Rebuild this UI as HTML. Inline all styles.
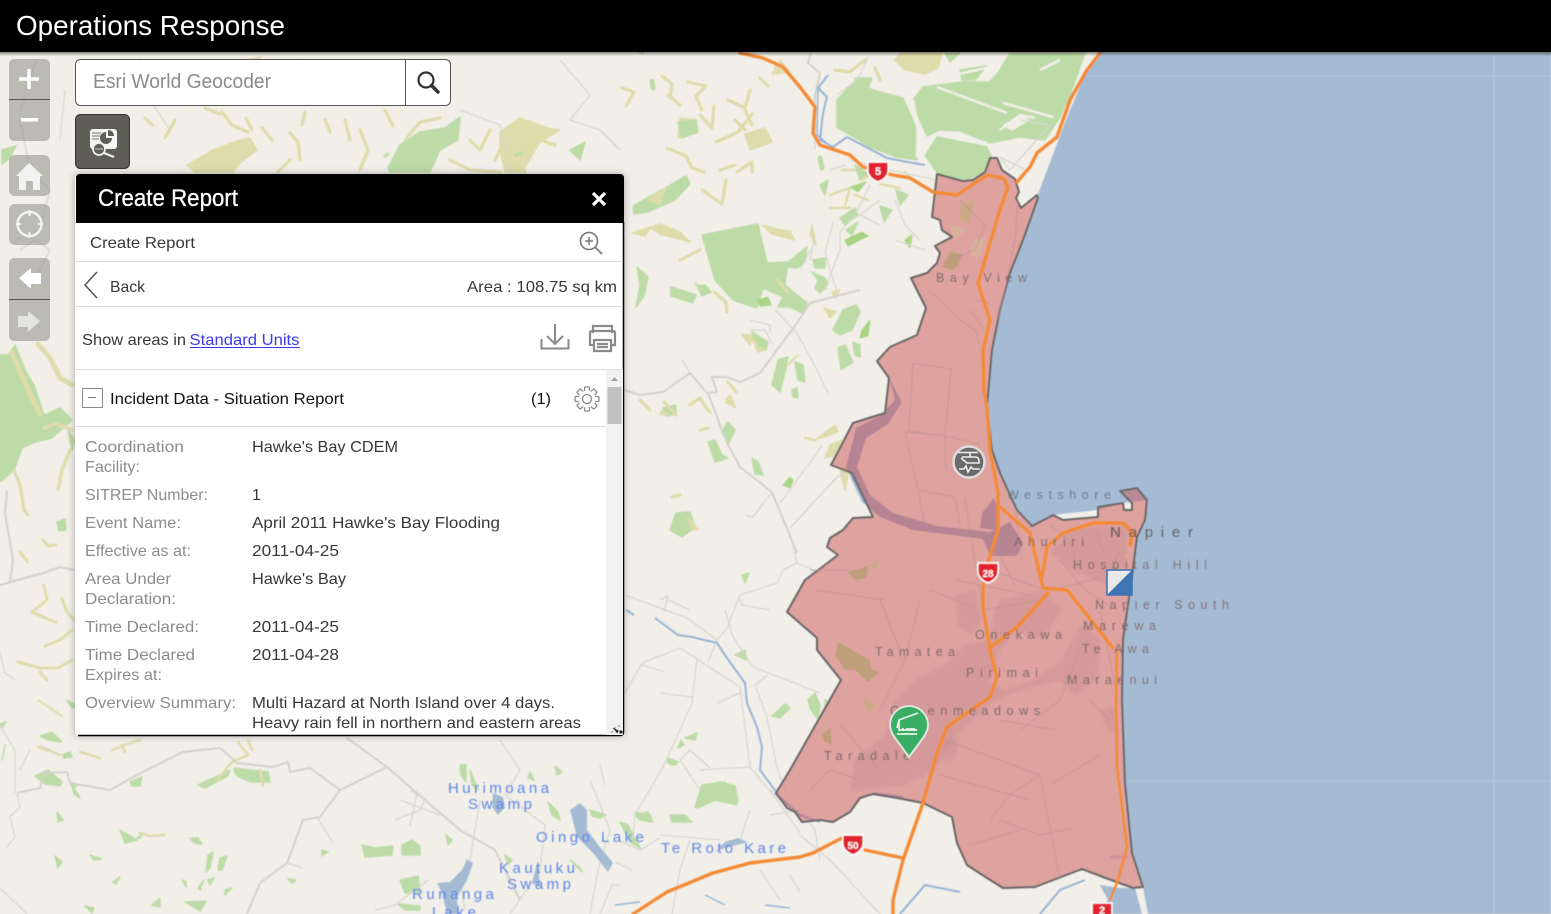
<!DOCTYPE html>
<html><head><meta charset="utf-8"><title>Operations Response</title>
<style>
html,body{margin:0;padding:0;background:#f2efe9;overflow:hidden}
svg{display:block;position:absolute;left:0;top:0}
text{font-family:"Liberation Sans",sans-serif}
.g{fill:#bddba7;stroke:#bddba7;stroke-width:1.5;stroke-linejoin:round}
.gd{fill:#a9d484;stroke:#a9d484;stroke-width:1;stroke-linejoin:round}
.o{fill:#dfdcab;stroke:#dfdcab;stroke-width:1.5;stroke-linejoin:round}
.ol{fill:none;stroke:#dfdcab;stroke-width:3.2;stroke-linejoin:round;stroke-linecap:round}
.gl{fill:none;stroke:#bddba7;stroke-width:5;stroke-linejoin:round;stroke-linecap:round}
.r{fill:none;stroke:#d8d6d0;stroke-width:1.3}
.r2{fill:none;stroke:#d3d1cb;stroke-width:2}
.pale{fill:none;stroke:#f2efe9;stroke-width:2.5}
.h{fill:none;stroke:#f48a35;stroke-width:3.4;stroke-linejoin:round;stroke-linecap:round}
.w{fill:#a5bbd4}
.ri{fill:none;stroke:#97b4d6;stroke-width:2}
.ir{fill:none;stroke:#b98d8e;stroke-width:1;opacity:.6}
.sub{fill:#b0757b;opacity:.2}
.ml{font-size:12.5px;fill:#7d6a6a}
.bl{font-size:15px;fill:#5c86e6}
.lb{font-size:16px;fill:#8c8c8c}
.vl{font-size:16px;fill:#383838}
.ctl{fill:#8e8e86;fill-opacity:.55}
</style></head><body>
<svg width="1551" height="914" viewBox="0 0 1551 914" xmlns="http://www.w3.org/2000/svg">
<defs>
<filter id="sh" x="-5%" y="-5%" width="110%" height="110%"><feDropShadow dx="0" dy="0" stdDeviation="4" flood-color="#000" flood-opacity=".3"/></filter>
<filter id="bl" x="0" y="0" width="100%" height="100%"><feGaussianBlur stdDeviation=".55"/></filter>
<filter id="bl2" x="-5%" y="-5%" width="110%" height="110%"><feGaussianBlur stdDeviation="1.6"/></filter>
<linearGradient id="top" x1="0" y1="0" x2="0" y2="1"><stop offset="0" stop-color="#000" stop-opacity=".45"/><stop offset="1" stop-color="#000" stop-opacity="0"/></linearGradient>
</defs>
<rect width="1551" height="914" fill="#f2efe9"/>
<g filter="url(#bl)">
<!-- water -->
<path class="w" d="M1100 52L1087 70 1067 117 1037 197 1023 240 1010 273 1000 310 992 350 987 407 992 450 1000 473 1017 510 1032 526 1053 515 1098 510 1123 503 1147 500 1145 520 1137 537 1132 577 1123 640 1122 700 1125 783 1132 853 1143 887 1148 914H1551V52Z"/>
<path d="M1494 52V914M1125 781H1551M1085 76H1551" stroke="#b3c6db" stroke-width="1" fill="none"/>
<!-- top greens -->
<path class="g" d="M853 83L880 92 903 98 915 125 917 160 897 157 870 147 837 127 837 100Z"/>
<path class="g" d="M923 87L962 82 990 82 1000 70 1010 53H1085L1070 95 1060 117 1045 140 1020 137 990 143 960 131 940 130 927 136 919 118 913 100Z"/>
<path class="g" d="M937 137L987 147 992 158 985 170 968 180 937 173 925 155Z"/>
<path class="o" d="M900 53H942L938 68 925 74 905 70 895 60Z"/>
<path class="g" d="M945 53H960L950 62Z"/>
<path class="g" d="M960 70L987 66 975 80 962 80Z"/>
<path class="pale" d="M937 87L1007 113M913 100L918 127 917 157M922 157L937 133 987 143M1003 103L1053 117M1000 130L1020 115 1035 118M940 78L1000 65M1040 70L1060 60"/>
<path d="M1003 125L1020 115 1030 120 1012 131Z" fill="#f2efe9"/>
<!-- right of panel olive/green -->
<path class="ol" d="M622 88L634 92 626 106M662 76L672 84 670 98M688 82L706 86 696 96 702 110M668 95L680 105M700 115L712 128 714 106M728 100L745 108 750 90M745 110L752 125"/>
<path class="ol" d="M667 148L686 156 692 168 704 172M720 170L735 165M737 172L752 162 752 172M735 120L745 130M716 142L738 132 752 114M702 190L722 204 726 180"/>
<path class="o" d="M680 118L697 120 692 132 678 138ZM780 60L790 72 772 74Z"/>
<path class="g" d="M678 122L696 120 698 132 682 138Z"/>
<path class="g" d="M633 206L658 192 686 176 690 184 675 200 648 212 634 214Z"/>
<path class="o" d="M648 200L665 188 660 204ZM745 134L765 128 772 142 750 150Z"/>
<path class="gl" d="M652 81L653 88M820 158L822 168M640 50L642 52"/>
<path class="ol" d="M835 70L850 72 865 60M895 60L920 72M875 68L880 80"/>
<path class="g" d="M855 78L872 78 868 88 855 90Z"/>
<path class="ol" d="M760 78L768 86M680 260L700 250M774 230L790 232"/>
<!-- big field and neighbours -->
<path class="g" d="M702 235L758 224 767 263 788 262 807 247 805 262 797 268 787 267 785 285 797 295 807 303 802 313 790 307 778 307 783 297 763 288 757 308 733 300 715 280Z"/>
<path class="o" d="M632 233L660 224 680 232 690 242 660 234 650 228 645 236Z"/>
<path class="o" d="M762 225L790 232 795 240 772 234Z"/>
<path class="ol" d="M714 292L726 302 727 312M696 284L708 292M777 280L788 292"/>
<path class="g" d="M671 287L696 295 693 303 671 296Z"/>
<path class="g" d="M697 286L705 285 711 292 702 296Z"/>
<path class="g" d="M637 267L648 277 644 296 636 307 640 285Z"/>
<path class="g" d="M813 260L825 258 825 268 815 268ZM812 272L825 278 828 284 820 293 815 288 818 280ZM833 330L843 310 856 305 860 312 852 330 840 335ZM838 348L845 345 853 362 841 370ZM853 342L860 345 860 357 855 355ZM772 385L778 360 788 357 785 372 780 392ZM795 362L803 365 805 382 798 380ZM792 390L797 388 798 398 793 397ZM752 332L768 342 766 350 756 345ZM663 408L676 405 676 414 666 416ZM722 432L728 422 735 430 728 445ZM708 442L715 440 722 455 728 458 715 462ZM752 458L758 462 763 475 755 474ZM670 530L676 513 690 512 695 527 682 537ZM840 218L855 208 858 215 845 225ZM846 230L858 222 852 235ZM880 206L892 210 884 222ZM896 190L908 195 900 205ZM820 185L828 180 825 195ZM855 165L870 175 860 180Z"/>
<path class="gd" d="M783 485L790 477 793 480 790 488ZM850 187L866 182 858 192ZM845 240L862 232 868 236 848 246ZM758 300L768 297 771 305 760 306ZM862 330L870 320 868 336 860 338ZM905 240L912 235 910 248Z"/>
<path class="o" d="M810 235L812 225 816 245ZM832 292L840 290 835 298ZM742 335L752 335 750 345ZM755 346L765 350 758 352ZM824 308L836 312 830 318ZM725 402L730 395 736 408ZM830 445L843 440 835 455 825 458ZM815 440L835 425 838 432ZM792 360L798 355 788 365ZM840 470L850 465 845 490ZM688 518L692 530 698 530ZM660 415L668 414 662 410Z"/>
<path class="ol" d="M690 405L700 398 706 408 710 412M728 382L736 392M750 336L756 344M676 415L664 402M700 430L708 428M680 495L672 497M640 400L650 410"/>
<path class="ol" d="M805 438L815 440M862 180L875 170M855 195L868 200M842 170L855 170M830 195L850 188 845 205M830 208L850 208M880 184L900 188M905 172L912 180" style="stroke-width:2.500"/>
<path class="g" d="M735 655L745 650 747 660ZM742 575L749 573 745 583ZM685 738L697 733 695 740ZM678 748L681 740 684 745ZM667 758L678 762 676 765 668 763ZM772 716L785 704 790 708 780 718ZM808 700L815 693 820 705 818 720 810 708ZM695 807L702 785 725 782 737 805 715 800 697 808ZM635 815L648 812 653 822 640 820ZM825 700L830 703 825 706Z"/>
<!-- olive upper panel bits -->
<path class="o" d="M187 165L213 150 240 140 250 138 257 150 240 163 233 172H195Z"/>
<path class="ol" d="M222 112L232 125 248 132M246 118L252 130M262 128L272 140M290 133L298 142 300 160M305 112L302 125M325 120L330 132M345 120L350 140M360 130L368 150 360 170M205 108L220 114M385 110L393 126M290 160L278 172M175 120L165 138M145 118L152 125M300 60L310 62"/>
<path class="g" d="M388 168L400 145 420 132 445 128 460 117 458 140 440 150 430 172H390Z"/>
<path class="ol" d="M405 140L420 122 440 118M470 140L480 150 490 130M495 160L512 125M515 160L525 172M540 140L555 145M450 160L470 170 500 172"/>
<path class="o" d="M500 132L520 118 548 128 560 130 540 142 522 172 505 172 500 150Z"/>
<path class="gl" d="M385 156L388 154M515 155L522 153" style="stroke-width:3"/>
<path class="ol" d="M240 62L260 58M130 70L140 60M180 72L190 72M300 70L312 85"/>
<path class="g" d="M2 150L16 146 10 158 2 164ZM120 92L130 90 125 98ZM570 150L585 142 580 160Z"/>
<!-- left strip -->
<path class="g" d="M0 355L8 355 15 345 26 372 34 385 44 415 60 408 72 420 52 438 35 442 22 448 14 470 0 482Z"/>
<path class="ol" d="M38 344L50 358 60 378 72 385M12 352L20 372 32 398 40 414" style="stroke-width:5"/>
<path class="ol" d="M44 428L56 424 72 430M14 470L20 485 24 510 28 515M58 490L62 470 70 450"/>
<path class="g" d="M57 522L65 519 66 530 59 531Z"/>
<path class="g" d="M68 430L75 440 72 450Z"/>
<path class="ol" d="M20 552L28 562M43 540L48 546 56 545M44 585L47 600 32 612 45 618 56 622M45 646L60 640 72 630M18 662L40 668 58 668 72 660M40 672L47 680M62 598L66 610 74 620" style="stroke-width:3"/>
<path class="g" d="M67 700L78 706 72 708ZM0 724L6 722 2 728ZM40 736L52 732 62 742 48 740ZM72 786L78 794 80 798 74 794ZM57 812L63 820 58 822ZM5 745L2 760Z"/>
<path class="ol" d="M38 700L62 716" style="stroke-width:2"/>
<!-- bottom-left fields -->
<path class="g" d="M35 776L48 770 62 782 60 786 45 784ZM70 782L78 785 73 788ZM62 755L70 752 72 757 64 758ZM198 785L230 770 228 776 205 788ZM234 768L250 770 268 772 270 782 250 782 236 775ZM130 782L142 777 140 786 132 786ZM120 830L137 840 125 843ZM137 838L142 834 140 838ZM55 856L62 862 58 868ZM90 855L102 859 94 860ZM85 906L94 908 92 913ZM185 902L206 901 200 911ZM152 905L160 898 160 907ZM190 838L198 838 202 844 194 843ZM208 855L213 852 210 868 206 872ZM220 858L227 856 222 870 218 870ZM182 880L186 882 186 887ZM198 888L204 880 200 890ZM113 882L120 877 116 884ZM362 845L375 848 393 846 392 855 365 857ZM402 845L412 840 420 846 420 855 402 855ZM288 879L296 880 292 883ZM398 904L420 906 420 910 405 910ZM322 850L328 852 322 856ZM208 880L214 878 210 885ZM225 890L232 888 225 895Z"/>
<path class="ol" d="M38 747L60 755M80 752L100 758M112 750L130 743 140 740M122 745L125 752M140 833L150 836 165 835M217 780L232 762 248 755 238 742M260 770L263 785M248 740L252 750" style="stroke-width:2.500"/>
<!-- bottom centre fields -->
<path class="g" d="M460 765L466 765 466 782 461 775ZM470 770L478 790 472 785ZM548 802L558 812 560 820 552 815ZM590 810L606 815 600 818 592 816ZM620 822L628 825 640 848 630 842ZM635 812L645 814 650 822ZM670 815L685 815 692 822 672 822ZM570 860L580 868 582 872ZM505 855L512 860 508 864ZM400 880L418 876 420 892 405 893ZM446 835L452 840 448 845ZM530 772L534 780 528 778ZM555 766L562 772 557 775Z"/>
<path class="g" d="M696 805L705 785 720 782 735 786 738 802 715 800 698 808Z"/>
<path class="g" d="M636 815L650 815 652 822 640 820ZM667 758L678 762 672 765Z"/>
<!-- grey roads -->
<path class="r2" d="M860 290L833 297 810 303 797 323 777 350 760 373 740 382 727 377 712 377 717 392 707 393 690 373 663 392 640 395 625 390M708 393L717 417 727 443 740 467 772 492 797 553"/>
<path class="r" d="M775 310L797 333 817 370 828 393M772 492L753 517 745 515M780 503L817 453 822 445M790 528L837 477 850 470M690 373L682 360M833 222L825 253 837 292M810 260L815 235M750 320L770 325 770 332M772 344L765 330 750 330"/>
<path class="r" d="M625 595L687 618 717 640 727 628 740 595 777 583 783 570 797 563 792 540M797 563L820 573M725 610L733 637 753 667 820 693M717 640L708 662M642 663L680 648 740 687 750 767 777 800 800 833M642 663L625 693M642 665L665 672M697 658L692 703 663 767 635 815 633 840M660 693L692 697M717 703L740 693M767 717L755 685 768 675M767 717L777 767 785 790M740 598L742 605 770 610M660 600L668 596 664 612M690 610L668 600"/>
<path class="r" d="M800 835L830 860 880 914M700 770L750 767M700 790L680 760 690 750 710 768M770 815L800 810 815 830 820 860M750 810L740 840M790 875L800 892M780 800L770 790M720 840L660 835M780 900L760 870M690 840L680 870 672 914M617 840L640 850 660 838M615 862L632 870M600 914L612 885 620 885"/>
<path class="r2" d="M17 793L40 788 43 773 67 772 70 783 110 790 137 775 183 752 220 748 237 763 273 767 288 762 290 772 310 768 340 790 387 767 417 793 460 830 495 850 520 900M340 790L320 817 303 820 287 863 260 883 247 914M387 767L347 738"/>
<path class="r" d="M317 817L333 843M17 793L20 807 10 817 15 837 7 847M0 888L27 914M287 863L303 868M440 815L400 800M395 820L420 810 425 800 410 790M417 793L410 826M428 880L395 905 375 910M460 880L465 910M500 740L520 770 505 795 545 825 540 870M540 870L510 914M590 780L610 830 598 870 590 914M600 765L605 785M480 800L470 860"/>
<path class="r2" d="M0 585L43 573 60 567 75 570M7 490L5 513 13 560 10 582"/>
<path class="r" d="M0 653L5 673 15 680M0 726L15 750 15 793M40 745L60 755M30 750L20 770M20 250L35 240 50 250 30 290M20 120L30 170 50 190 40 230 15 240M36 60L20 110M65 90L60 140"/>
<path class="r" d="M140 60L160 70 150 100 170 130M460 110L500 125 510 170M620 150L600 130 570 120 590 95 560 60"/>
<path class="r2" d="M811 52L808 63 820 73 815 95 813 135"/>
<path class="r" d="M868 57L860 75 853 83 837 95M890 170L937 180M850 160L890 170M815 150L815 115M830 170L845 165M880 200L860 215 880 225M870 185L855 215 840 232 840 250 825 290M800 270L810 250M895 200L905 225 920 240M895 240L910 245 925 250M1020 120L1050 125 1010 170 1000 157 1030 172"/>
<!-- rivers -->
<path class="ri" d="M828 75L818 88 827 97 823 113 820 140 833 147 847 137 887 158 913 163 925 165"/>
<path class="ri" style="stroke-width:1.500" d="M818 88L817 135 830 146"/>
<path class="ri" d="M655 618L678 635 692 637 717 643 727 658 745 683 747 703 757 727 762 747 760 770 777 793"/>
<path class="ri" d="M626 610L634 615M775 793L800 815 820 822M873 793L903 797M1040 914L1060 890 1085 880M900 914L925 885 960 892"/>
<path class="ri" d="M615 905L640 902M765 905L790 908M705 895L725 905" style="stroke-width:1.500"/>
<path class="w" d="M1100 885L1120 888 1135 888 1142 914H1095L1108 900ZM570 810L580 803 587 810 587 830 600 847 613 863 608 872 593 853 577 837ZM467 859L473 863 467 880 457 897 458 914H447L442 893 437 883 450 882 462 870ZM493 793L503 797 505 807 498 815 492 807ZM538 860L532 883 540 887ZM725 842L738 838 748 842 725 848 715 852Z"/>
<!-- estuary -->
<path fill="#a0b0cd" d="M889 378L895 400 880 416 856 428 846 467 862 502 880 517 913 530 983 539 990 556 1017 556 1023 543 1010 522 1000 527 990 532 937 526 893 513 870 495 857 467 866 438 888 424 902 402Z"/>
<path fill="#a0b0cd" d="M982 513L994 498 1000 515 996 530 980 528Z"/>
<!-- polygon -->
<path fill="#cc5c5c" fill-opacity=".52" stroke="#666" stroke-width="2" stroke-linejoin="round" d="M937 174L963 181 973 180 985 172 990 158 997 158 1002 170 1015 179 1019 192 1016 198 1021 208 1037 195 1038 198 1023 240 1010 273 1000 310 992 350 987 407 992 450 1000 473 1017 510 1032 526 1053 515 1063 520 1098 517 1098 507 1123 503 1124 510 1132 510 1132 503 1120 491 1137 488 1147 500 1145 520 1137 537 1132 577 1123 640 1122 700 1125 783 1132 853 1143 887 1133 888 1103 877 1082 869 1035 887 1003 888 987 878 967 865 957 843 952 817 923 803 903 799 873 794 860 798 850 812 833 822 820 820 802 822 795 812 787 808 776 793 790 770 841 680 817 650 817 638 787 612 805 580 838 555 827 547 830 538 843 530 853 518 873 517 852 473 831 465 853 423 885 413 889 378 877 361 890 347 917 335 926 308 911 278 927 273 937 263 940 253 935 246 952 237 942 230 940 220 932 217Z"/>
<!-- suburbs -->
<g filter="url(#bl2)">
<path class="sub" d="M955 595L975 590 982 620 972 635 958 625ZM1000 600L1045 590 1062 610 1040 640 1015 630 1000 650 990 682 1005 690 1030 682 1060 662 1085 620 1100 640 1098 680 1075 695 1060 680 1020 690 995 700 955 735 935 770 905 785 850 790 855 760 885 735 895 700 915 680 945 665 965 645 990 640 995 610Z"/>
<path class="sub" d="M1050 552L1075 527 1130 527 1120 590 1070 570Z"/>
<path class="sub" d="M1100 710L1116 705 1116 735 1105 725ZM945 740L960 735 955 760 942 760Z"/>
</g>
<path fill="#b89e74" opacity=".85" d="M838 642L870 660 872 670 880 672 868 682 855 670 845 670 835 655ZM942 267L950 252 962 254 958 266 952 270ZM848 572L868 566 866 578 855 580ZM822 735L830 728 832 745 825 742Z"/>
<path fill="#c8ab7a" opacity=".7" d="M862 697L875 705 868 714ZM960 205L975 200 968 225 960 220ZM870 565L880 558 875 570Z"/>
<path fill="#cfc098" opacity=".5" d="M950 225L965 230 955 240ZM975 240L985 238 978 260 970 252Z"/>
<!-- inner lines -->
<path class="ir" d="M913 363L951 369 945 436 909 431ZM905 432L945 436 980 444M905 432L918 490M945 436L946 470M918 490L955 497 960 525M980 345L975 330 960 320 940 300 928 290M960 200L985 225 975 250 950 260M1018 200L1015 240 1005 290 998 320M985 568L1045 590M955 580L1030 595M985 610L1040 600M1050 590L1100 578M918 490L925 525M815 590L885 600M855 570L810 570M930 590L975 608M880 600L900 650M920 600L905 660 880 710M945 740L1040 775 1010 795 990 820M965 500L990 655M1040 775L1060 880M1000 820L1040 835 1072 828M1020 730L1060 700 1080 650M1050 785L1100 755M840 725L880 770M810 790L830 770 860 780M1090 700L1110 720M970 310L985 330M975 300L992 305"/>
<path class="ir" d="M1015 510L1022 560M1000 555L1015 585M1050 525L1070 540 1075 560M1095 530L1105 555M1120 550L1110 570M1060 560L1085 590M1085 590L1108 605M1100 610L1118 700M1118 720L1118 780M970 845L1020 830M1000 720L1055 730M940 775L1030 800"/>
<path stroke="#a58" stroke-opacity=".25" stroke-width="3" fill="none" d="M1110 857H1128"/>
<!-- highways -->
<path class="h" d="M740 53L763 58 783 67 800 87 815 107 813 133 820 145 850 155 863 167 893 175 910 178 933 192 957 195 987 175 1003 178 1008 187 1000 210 990 243 978 283 990 320 983 350 984 390 987 407 990 450 998 493 998 530 988 563 983 587 983 607 990 650 997 677 990 697 947 727 938 750 923 803 903 860 893 900 893 914"/>
<path class="h" d="M1000 507L1030 533 1043 588 1067 590 1113 648M1048 593L1017 627 990 648M1042 577L1047 547 1063 533 1093 523 1123 523 1133 533 1130 545"/>
<path class="h" style="stroke-width:2.500" d="M1117 650L1116 700 1117 767 1127 847 1118 880 1110 900"/>
<path class="h" d="M1017 182L1030 167 1037 153 1057 137 1070 100 1087 70 1100 53"/>
<path class="h" d="M633 914L667 892 713 873 750 863 800 857 813 853 842 838M865 850L903 858"/>
<!-- labels -->
<text class="ml" x="936" y="282" textLength="91">Bay View</text>
<text class="ml" x="1007" y="499" textLength="104" style="fill:#6e7580">Westshore</text>
<text class="ml" x="1110" y="537" textLength="83" style="font-size:15px;fill:#555">Napier</text>
<text class="ml" x="1014" y="546" textLength="70">Ahuriri</text>
<text class="ml" x="1073" y="569" textLength="134">Hospital Hill</text>
<text class="ml" x="1095" y="609" textLength="134">Napier South</text>
<text class="ml" x="1083" y="630" textLength="73">Marewa</text>
<text class="ml" x="1082" y="653" textLength="67">Te Awa</text>
<text class="ml" x="975" y="639" textLength="87">Onekawa</text>
<text class="ml" x="875" y="656" textLength="80">Tamatea</text>
<text class="ml" x="966" y="677" textLength="72">Pirimai</text>
<text class="ml" x="1067" y="684" textLength="90">Maraenui</text>
<text class="ml" x="890" y="715" textLength="150">Greenmeadows</text>
<text class="ml" x="824" y="760" textLength="86">Taradale</text>
<text class="bl" x="448" y="793" textLength="101">Hurimoana</text>
<text class="bl" x="468" y="809" textLength="64">Swamp</text>
<text class="bl" x="536" y="842" textLength="108">Oingo Lake</text>
<text class="bl" x="661" y="853" textLength="125">Te Roto Kare</text>
<text class="bl" x="499" y="873" textLength="76">Kautuku</text>
<text class="bl" x="507" y="889" textLength="64">Swamp</text>
<text class="bl" x="412" y="899" textLength="82">Runanga</text>
<text class="bl" x="432" y="917" textLength="44">Lake</text>
<!-- shields -->
<g font-family="Liberation Sans" font-weight="700" fill="#fff" text-anchor="middle">
<path fill="#e2222d" stroke="#fff" stroke-width="1.500" d="M868 162H888Q889 172 887 175 884 180 878 182 872 180 869 175 867 172 868 162Z"/><text x="878" y="175" font-size="11">5</text>
<path fill="#e2222d" stroke="#fff" stroke-width="1.500" d="M978 563H998Q999 573 997 576 994 581 988 583 982 581 979 576 977 573 978 563Z"/><text x="988" y="577" font-size="10">28</text>
<path fill="#e2222d" stroke="#fff" stroke-width="1.500" d="M843 835H863Q864 845 862 848 859 853 853 855 847 853 844 848 842 845 843 835Z"/><text x="853" y="849" font-size="10">50</text>
<path fill="#e2222d" stroke="#fff" stroke-width="1.500" d="M1092 903H1112V925H1092Z"/><text x="1102" y="914" font-size="11">2</text>
</g>
</g>
<!-- square symbol -->
<g><rect x="1107" y="570" width="25" height="25" fill="#e9e9e9" stroke="#3c71b2" stroke-width="1.500"/><path d="M1132 570V595H1107Z" fill="#3f74b5"/></g>
<!-- helicopter -->
<g>
<circle cx="969" cy="462" r="15.500" fill="#6a6a6a" stroke="#dcdcdc" stroke-width="2.500"/>
<path d="M958 452.500H978M962 457H975Q979 457 979 461V463H967L961 458M970 453V457M959 469H964L966 466 968 472 971 467 973 469H980" fill="none" stroke="#f0f0f0" stroke-width="1.600"/>
</g>
<!-- green pin -->
<g>
<path d="M909 757L895 738Q890 731 890 725A19 19 0 0 1 928 725Q928 731 923 738Z" fill="#3aaf63" stroke="#dfe4df" stroke-width="2"/>
<path d="M897 728L899 720 918 713M899 720V730H917M897 734H917M902 729H904M906 729H915" fill="none" stroke="#eaf3ea" stroke-width="1.700"/>
</g>
<!-- top bar -->
<rect x="0" y="52" width="1551" height="4" fill="url(#top)"/>
<rect width="1551" height="52" fill="#000"/>
<text x="16" y="35" font-size="28" fill="#fff" textLength="269" lengthAdjust="spacingAndGlyphs">Operations Response</text>
<!-- left controls -->
<rect class="ctl" x="9" y="59" width="41" height="82" rx="5"/>
<rect x="9" y="99" width="41" height="1" fill="#555"/>
<path d="M19 79H39M29 69V89" stroke="#fff" stroke-width="3.500" fill="none"/>
<rect x="21" y="118" width="17" height="3.500" fill="#fff"/>
<rect class="ctl" x="9" y="155" width="41" height="41" rx="6"/>
<path d="M29 163L43 176H40V190H33V181H26V190H19V176H16Z" fill="#f2f2f0"/>
<rect class="ctl" x="9" y="204" width="41" height="41" rx="6"/>
<circle cx="29.500" cy="224" r="12" fill="none" stroke="#f2f2f0" stroke-width="2.500"/>
<path d="M29.500 210V216M29.500 232V238M16 224H21M38 224H43" stroke="#f2f2f0" stroke-width="2"/>
<rect class="ctl" x="9" y="258" width="41" height="83" rx="5"/>
<rect x="9" y="299" width="41" height="1" fill="#555"/>
<path d="M19 278L31 268V273H41V284H31V289Z" fill="#fff"/>
<path d="M40 321L28 311V316H18V327H28V332Z" fill="#e4e4e0"/>
<!-- search -->
<rect x="75.500" y="59.500" width="375" height="46" rx="5" fill="#fff" stroke="#555"/>
<line x1="405.500" y1="60" x2="405.500" y2="105" stroke="#555"/>
<text x="93" y="88" font-size="20" fill="#8b8b8b" textLength="178" lengthAdjust="spacingAndGlyphs">Esri World Geocoder</text>
<circle cx="426" cy="80" r="7.500" fill="none" stroke="#333" stroke-width="2.200"/>
<path d="M431.500 85.500L438 92" stroke="#333" stroke-width="3.500" stroke-linecap="round"/>
<!-- report button -->
<rect x="75.500" y="114.500" width="54" height="54" rx="5" fill="#5e5e57" stroke="#333"/>
<rect x="90" y="129" width="27" height="20" rx="3" fill="#f4f4f4"/>
<path d="M106 132A6 6 0 1 0 112 138H106Z" fill="#5e5e57"/>
<path d="M108 130A6 6 0 0 1 114 136H108Z" fill="#5e5e57"/>
<path d="M92 133H101M92 136H100M92 139H99" stroke="#8a8a85" stroke-width="1.200"/>
<circle cx="99" cy="149" r="6" fill="#5e5e57" stroke="#eee" stroke-width="1.800"/>
<path d="M95 149H103" stroke="#aaa" stroke-width="1.500"/>
<path d="M104 153L114 157" stroke="#eee" stroke-width="2.200"/>
<!-- panel -->
<g filter="url(#sh)"><rect x="75" y="174" width="549" height="562" rx="4" fill="#fff"/></g>
<path d="M76 223V178Q76 174 80 174H620Q624 174 624 178V223Z" fill="#000"/>
<path d="M623.500 222V732Q623.500 735.500 620 735.500H78" fill="none" stroke="#000" stroke-width="1.500"/>
<text x="98" y="206" font-size="24" fill="#fff" stroke="#fff" stroke-width=".3" textLength="140" lengthAdjust="spacingAndGlyphs">Create Report</text>
<path d="M593 193L605 205M605 193L593 205" stroke="#fff" stroke-width="3.200"/>
<text class="vl" x="90" y="248" textLength="105" lengthAdjust="spacingAndGlyphs">Create Report</text>
<circle cx="589" cy="241" r="8.500" fill="none" stroke="#777" stroke-width="1.600"/>
<path d="M585 241H593M589 237V245" stroke="#777" stroke-width="1.400"/>
<path d="M595 247L602 254" stroke="#888" stroke-width="2"/>
<rect x="76" y="261" width="547" height="1" fill="#ddd"/>
<path d="M97 272L85 285 97 298" fill="none" stroke="#555" stroke-width="1.500"/>
<text class="vl" x="110" y="292" textLength="35" lengthAdjust="spacingAndGlyphs">Back</text>
<text class="vl" x="467" y="292" textLength="150" lengthAdjust="spacingAndGlyphs">Area : 108.75 sq km</text>
<rect x="76" y="306" width="547" height="1" fill="#ddd"/>
<text class="vl" x="82" y="345" textLength="104" lengthAdjust="spacingAndGlyphs">Show areas in</text>
<text x="189.500" y="345" font-size="16" fill="#3a3af0" textLength="110" lengthAdjust="spacingAndGlyphs">Standard Units</text>
<rect x="190" y="347" width="110" height="1" fill="#3a3af0"/>
<path d="M555 324V343M547 336L555 344 563 336" fill="none" stroke="#8a8a8a" stroke-width="2"/>
<path d="M541.500 339V348.500H568.500V339" fill="none" stroke="#8a8a8a" stroke-width="2"/>
<path d="M593 333V326H612V333M593 345H590V333Q590 331 592 331H613Q615 331 615 333V345H612M594 340H611V351H594ZM597 344H608M597 347H608" fill="none" stroke="#8a8a8a" stroke-width="2.200"/>
<rect x="76" y="369" width="547" height="1" fill="#ddd"/>
<rect x="82.500" y="388.500" width="20" height="19" fill="#fff" stroke="#8a8a8a"/>
<rect x="88" y="397" width="8" height="1" fill="#777"/>
<text x="110" y="404" font-size="16" fill="#111" textLength="234" lengthAdjust="spacingAndGlyphs">Incident Data - Situation Report</text>
<text x="531" y="404" font-size="16" fill="#111" textLength="20" lengthAdjust="spacingAndGlyphs">(1)</text>
<g transform="translate(587 399)" fill="#fff" stroke="#8a8a8a" stroke-width="1.300">
<rect x="-2.500" y="-12" width="5" height="6" rx="1"/><rect x="-2.500" y="-12" width="5" height="6" rx="1" transform="rotate(45)"/><rect x="-2.500" y="-12" width="5" height="6" rx="1" transform="rotate(90)"/><rect x="-2.500" y="-12" width="5" height="6" rx="1" transform="rotate(135)"/><rect x="-2.500" y="-12" width="5" height="6" rx="1" transform="rotate(180)"/><rect x="-2.500" y="-12" width="5" height="6" rx="1" transform="rotate(225)"/><rect x="-2.500" y="-12" width="5" height="6" rx="1" transform="rotate(270)"/><rect x="-2.500" y="-12" width="5" height="6" rx="1" transform="rotate(315)"/>
<circle r="8.500" stroke="none"/><circle r="4.500"/></g>
<rect x="76" y="426" width="531" height="1" fill="#ddd"/>
<!-- scrollbar -->
<rect x="606" y="370" width="17" height="365" fill="#f1f1f1"/>
<path d="M614.500 377L611 381H618Z" fill="#a3a3a3"/>
<rect x="607.500" y="387" width="14" height="37" fill="#c1c1c1"/>
<path d="M618 725L620 727M614 729L616 727M611 732H613M616 732L618 730" stroke="#aaa" stroke-width="1.500"/>
<path d="M613 728L618 731 617 733M620 731H622V733H620Z" fill="#222" stroke="#222"/>
<!-- rows -->
<text class="lb" x="85" y="452" textLength="99" lengthAdjust="spacingAndGlyphs">Coordination</text>
<text class="lb" x="85" y="472" textLength="55" lengthAdjust="spacingAndGlyphs">Facility:</text>
<text class="lb" x="85" y="500" textLength="123" lengthAdjust="spacingAndGlyphs">SITREP Number:</text>
<text class="lb" x="85" y="528" textLength="96" lengthAdjust="spacingAndGlyphs">Event Name:</text>
<text class="lb" x="85" y="556" textLength="106" lengthAdjust="spacingAndGlyphs">Effective as at:</text>
<text class="lb" x="85" y="584" textLength="86" lengthAdjust="spacingAndGlyphs">Area Under</text>
<text class="lb" x="85" y="604" textLength="91" lengthAdjust="spacingAndGlyphs">Declaration:</text>
<text class="lb" x="85" y="632" textLength="114" lengthAdjust="spacingAndGlyphs">Time Declared:</text>
<text class="lb" x="85" y="660" textLength="110" lengthAdjust="spacingAndGlyphs">Time Declared</text>
<text class="lb" x="85" y="680" textLength="77" lengthAdjust="spacingAndGlyphs">Expires at:</text>
<text class="lb" x="85" y="708" textLength="151" lengthAdjust="spacingAndGlyphs">Overview Summary:</text>
<text class="vl" x="252" y="452" textLength="146" lengthAdjust="spacingAndGlyphs">Hawke's Bay CDEM</text>
<text class="vl" x="252" y="500">1</text>
<text class="vl" x="252" y="528" textLength="248" lengthAdjust="spacingAndGlyphs">April 2011 Hawke's Bay Flooding</text>
<text class="vl" x="252" y="556" textLength="87" lengthAdjust="spacingAndGlyphs">2011-04-25</text>
<text class="vl" x="252" y="584" textLength="94" lengthAdjust="spacingAndGlyphs">Hawke's Bay</text>
<text class="vl" x="252" y="632" textLength="87" lengthAdjust="spacingAndGlyphs">2011-04-25</text>
<text class="vl" x="252" y="660" textLength="87" lengthAdjust="spacingAndGlyphs">2011-04-28</text>
<text class="vl" x="252" y="708" textLength="303" lengthAdjust="spacingAndGlyphs">Multi Hazard at North Island over 4 days.</text>
<text class="vl" x="252" y="728" textLength="329" lengthAdjust="spacingAndGlyphs">Heavy rain fell in northern and eastern areas</text>
</svg>
</body></html>
